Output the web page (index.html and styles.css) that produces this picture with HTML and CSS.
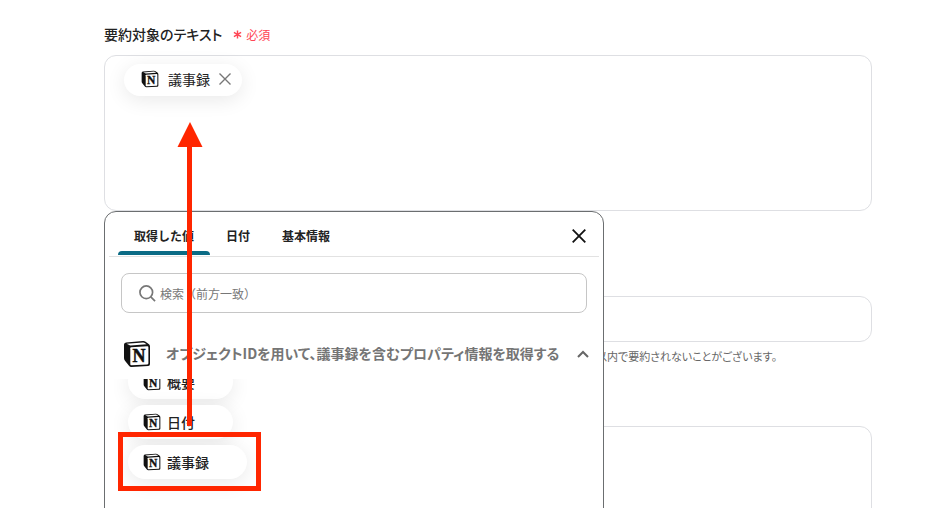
FILE: index.html
```html
<!DOCTYPE html>
<html lang="ja">
<head>
    <meta charset="UTF-8">
    <meta name="viewport" content="width=device-width, initial-scale=1.0">
    <title>要約対象のテキスト</title>
    <link rel="stylesheet" href="styles.css">
</head>
<body>

    <svg class="defs" aria-hidden="true">
        <symbol id="cube" viewBox="0 0 28 28">
            <path d="M1 4.500 Q1 2.600 3 2.400 L20 1.100 Q21.500 1 22.600 1.800 L26 4.200 Q27 5 27 6.500 V24 Q27 25.800 25.200 26 L8.500 27 Q7 27.100 6 25.800 L2 20.800 Q1 19.500 1 18 Z" fill="#111"/>
            <path d="M3.600 3.700 L20 2.500 Q21 2.400 21.800 3 L23.600 4.300 L7.600 5.400 Q6.500 5.400 5.700 4.800 Z" fill="#fff"/>
            <path d="M7.300 8.200 Q7.300 7.300 8.200 7.200 L24.400 6.200 Q25.400 6.200 25.400 7.200 V23.300 Q25.400 24.300 24.400 24.400 L8.400 25.300 Q7.300 25.300 7.300 24.300 Z" fill="#fff"/>
            <text x="16" y="22" text-anchor="middle" class="cube-letter">N</text>
        </symbol>
    </svg>

    <main class="page">
        <form class="form">
            <div class="field field-target">
                <div class="field-head">
                    <span class="field-label" id="targetLabel">要約対象のテキスト</span>
                    <span class="required"><svg class="asterisk" viewBox="0 0 10 10"><path d="M5 0.500V9.500M1 2.700L9 7.300M9 2.700L1 7.300"/></svg>必須</span>
                </div>
                <div class="editor" role="group" aria-labelledby="targetLabel">
                    <span class="chip chip-small">
                        <svg class="chip-icon"><use href="#cube"/></svg>
                        議事録
                        <button type="button" class="chip-remove" aria-label="削除"><svg viewBox="0 0 12 12"><path d="M0.500 0.500L11.500 11.500M11.500 0.500L0.500 11.500"/></svg></button>
                    </span>
                </div>

                <div class="picker">
                    <div class="picker-head">
                        <div class="tabs" role="tablist">
                            <button type="button" class="tab active" role="tab" aria-selected="true">取得した値</button>
                            <button type="button" class="tab" role="tab">日付</button>
                            <button type="button" class="tab" role="tab">基本情報</button>
                        </div>
                        <button type="button" class="picker-close" aria-label="閉じる"><svg viewBox="0 0 14 14"><path d="M0.700 0.700L13.300 13.300M13.300 0.700L0.700 13.300"/></svg></button>
                    </div>
                    <div class="search">
                        <svg class="search-icon" viewBox="0 0 18 18"><circle cx="7.700" cy="7.700" r="6.700"/><path d="M12.500 12.500L17 17"/></svg>
                        <input type="text" class="search-input" placeholder="検索（前方一致）" aria-label="検索">
                    </div>
                    <button type="button" class="group" aria-expanded="true">
                        <svg class="group-icon"><use href="#cube"/></svg>
                        <span class="group-title">オブジェクトIDを用いて、議事録を含むプロパティ情報を取得する</span>
                        <svg class="chevron" viewBox="0 0 12 8"><path d="M1 7L6 2L11 7"/></svg>
                    </button>
                    <div class="options">
                        <button type="button" class="chip option"><svg class="chip-icon"><use href="#cube"/></svg>概要</button>
                        <button type="button" class="chip option"><svg class="chip-icon"><use href="#cube"/></svg>日付</button>
                        <button type="button" class="chip option"><svg class="chip-icon"><use href="#cube"/></svg>議事録</button>
                    </div>
                </div>

                <svg class="annotation" viewBox="0 0 160 396" aria-hidden="true">
                    <path d="M86 24L98.500 49H73.500Z" fill="#ff2600"/>
                    <rect x="83" y="46" width="5" height="282" fill="#ff2600"/>
                    <rect x="16.500" y="336.500" width="138" height="54" fill="none" stroke="#ff2600" stroke-width="5"/>
                </svg>
            </div>

            <div class="field field-length">
                <input type="text" class="text-input" aria-label="文字数">
                <p class="hint">以内で要約されないことがございます。</p>
            </div>

            <div class="field">
                <textarea class="text-area" aria-label="備考"></textarea>
            </div>
        </form>
    </main>

</body>
</html>
```
FILE: styles.css
```css
* {
    box-sizing: border-box;
}
body {
    margin: 0;
    background: #fff;
    color: #222;
    font-family: "Noto Sans CJK JP", sans-serif;
    font-size: 14px;
}
button, input, textarea {
    font: inherit;
    color: inherit;
}
button {
    border: none;
    background: none;
    padding: 0;
    cursor: pointer;
}
svg {
    display: block;
    flex: none;
}
.defs {
    display: none;
}
.cube-letter {
    font: bold 18px "Liberation Serif", serif;
    fill: #111;
    stroke: #111;
    stroke-width: 0.5;
}
.page {
    height: 100vh;
    overflow: hidden;
    padding: 23px 70px 0 104px;
}

/* fields */
.field-target {
    position: relative;
    margin-bottom: 85px;
}
.field-head {
    display: flex;
    align-items: center;
    gap: 11px;
    height: 22px;
    margin-bottom: 10px;
}
.field-label {
    font-weight: 500;
    font-feature-settings: "palt";
}
.required {
    display: flex;
    align-items: center;
    gap: 4px;
    font-size: 12px;
    color: #ff4655;
}
.asterisk {
    width: 9px;
    height: 9px;
    stroke: #ff4655;
    stroke-width: 1.6;
}
.editor, .text-input, .text-area {
    display: block;
    width: 100%;
    border: 1px solid #dedfe3;
    border-radius: 12px;
    background: #fff;
}
.editor {
    height: 156px;
    padding: 8px 19px;
}
.text-input {
    height: 46px;
    padding: 0 16px;
}
.text-area {
    height: 156px;
    padding: 16px;
    resize: none;
}
.field-length {
    margin-bottom: 60px;
}
.hint {
    margin: 4px 0 0;
    padding-left: 492px;
    font-size: 11px;
    line-height: 20px;
    color: #666;
    font-feature-settings: "palt";
}

/* chips */
.chip {
    display: flex;
    align-items: center;
    gap: 6px;
    height: 34px;
    padding: 0 38px 0 15px;
    border-radius: 17px;
    background: #fff;
    box-shadow: 0 4px 20px rgba(0, 0, 0, 0.09);
    font-weight: 500;
}
.chip-icon {
    width: 18px;
    height: 18px;
}
.chip-small {
    width: fit-content;
    height: 32px;
    gap: 9px;
    padding: 0 11px 2px 17px;
    font-weight: 400;
}
.chip-remove svg {
    width: 12px;
    height: 12px;
    stroke: #777;
    stroke-width: 1.4;
}

/* value picker */
.picker {
    position: absolute;
    top: 100%;
    left: 0;
    width: 500px;
    height: 360px;
    padding: 0 4px;
    border: 1px solid #6b6e70;
    border-radius: 12px;
    background: #fff;
}
.picker-head {
    display: flex;
    align-items: center;
    justify-content: space-between;
    height: 45px;
    padding: 0 13px 0 9px;
    border-bottom: 1px solid #e2e2e2;
}
.tabs {
    display: flex;
    align-self: stretch;
}
.tab {
    padding: 6px 16px 0;
    border-bottom: 4px solid transparent;
    font-size: 12px;
    font-weight: 700;
}
.tab.active {
    position: relative;
}
.tab.active::after {
    content: "";
    position: absolute;
    left: 0;
    right: 0;
    bottom: -3px;
    height: 4px;
    border-radius: 4px 4px 0 0;
    background: #0b6b85;
}
.picker-close svg {
    width: 14px;
    height: 14px;
    margin-top: 4px;
    stroke: #111;
    stroke-width: 1.8;
}
.search {
    display: flex;
    align-items: center;
    gap: 4px;
    height: 40px;
    margin: 16px 12px 0;
    padding: 0 17px;
    border: 1px solid #c6c6c6;
    border-radius: 8px;
}
.search-icon {
    width: 17px;
    height: 17px;
    fill: none;
    stroke: #777;
    stroke-width: 1.8;
}
.search-input {
    flex: 1;
    border: none;
    outline: none;
    padding: 0;
    font-size: 12px;
}
.search-input::placeholder {
    color: #777;
}
.group {
    display: flex;
    align-items: center;
    gap: 15px;
    width: 100%;
    height: 50px;
    margin-top: 16px;
    padding: 0 10px 0 14px;
    text-align: left;
}
.group-icon {
    width: 28px;
    height: 28px;
}
.group-title {
    flex: 1;
    padding-bottom: 2px;
    white-space: nowrap;
    font-weight: 700;
    color: #757575;
    font-feature-settings: "palt";
}
.chevron {
    width: 12px;
    height: 8px;
    fill: none;
    stroke: #666;
    stroke-width: 2;
}
.options {
    display: flex;
    flex-direction: column;
    align-items: flex-start;
    gap: 6px;
    height: 180px;
    overflow: hidden;
    padding: 0 19px;
}
.option {
    padding-bottom: 1px;
}
.option:first-child {
    margin-top: -14px;
}

/* arrow and frame over the picker */
.annotation {
    position: absolute;
    top: 75px;
    left: 0;
    width: 160px;
    height: 396px;
    pointer-events: none;
}
```
